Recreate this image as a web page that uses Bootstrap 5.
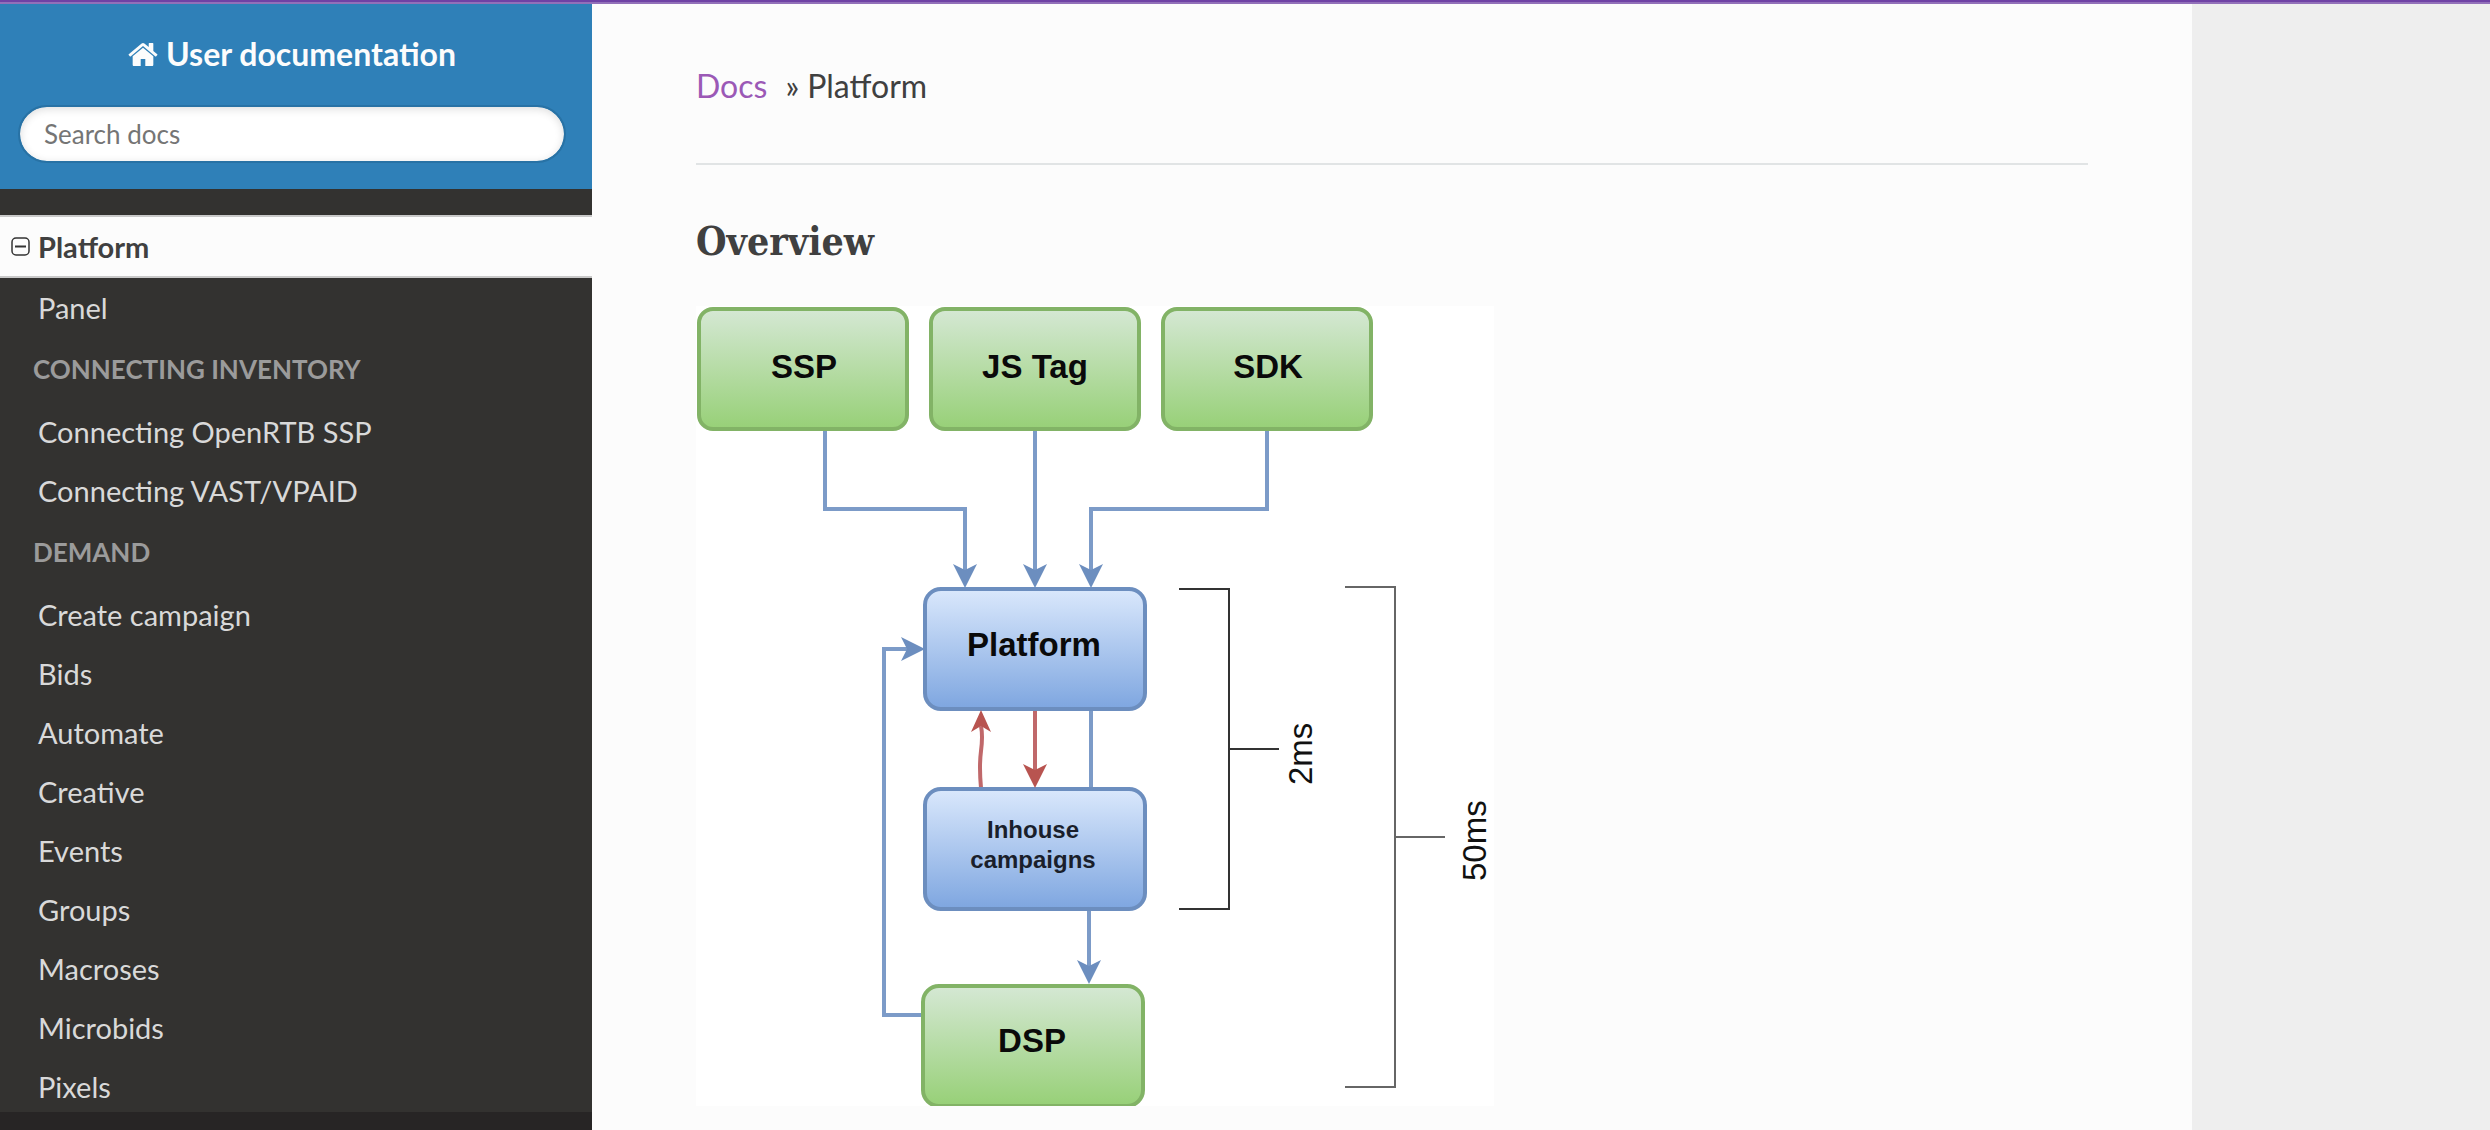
<!DOCTYPE html>
<html lang="en">
<head>
<meta charset="utf-8">
<meta name="viewport" content="width=device-width, initial-scale=1">
<title>Platform - User documentation</title>
<link href="https://cdn.jsdelivr.net/npm/bootstrap@5.3.0/dist/css/bootstrap.min.css" rel="stylesheet">
<style>
  body { font-family: Lato, "Open Sans", sans-serif; font-size: 32px; line-height: 48px; color: #404040; background: #eee; }
  .top-strip { height: 4px; background: #6f42a5; border-bottom: 2px solid #9270b9; }
  .side-panel { width: 592px; background: #333230; }
  .side-head { background: #2f80b8; padding: 22px 26px 26px 18px; gap: 23px; }
  .side-head a { color: #fcfcfc; line-height: 56px; font-weight: 700; gap: 8px; }
  .search-box { height: 58px; padding: 0 24px; font-size: 26px; border: 2px solid #2872a5; border-radius: 50px; box-shadow: inset 0 2px 8px #ddd; }
  .search-box::placeholder { color: #757575; }
  .side-menu { padding-top: 26px; font-size: 29px; }
  .side-menu a { display: block; color: #d9d9d9; line-height: 59px; padding-left: 38px; }
  .side-menu .is-current { display: flex; align-items: center; gap: 7px; padding-left: 11px; font-weight: 700; color: #404040; background: #fcfcfc; border-top: 2px solid #c9c9c9; border-bottom: 2px solid #c9c9c9; }
  .menu-caption { font-size: 26px; line-height: 65px; font-weight: 700; color: #9b9b9b; padding-left: 33px; }
  .version-bar { height: 18px; background: #272525; }
  .doc-body { max-width: 1600px; background: #fcfcfc; padding: 58px 104px 24px; }
  .trail { margin-bottom: 53px; gap: 8px; }
  .trail a { color: #9b59b6; margin-right: 10px; }
  .doc-body hr { margin: 0 0 52px; border-top: 2px solid #e1e4e5; opacity: 1; }
  .doc-title { font-family: "Roboto Slab", "DejaVu Serif Condensed", "DejaVu Serif", serif; font-stretch: condensed; font-size: 39px; line-height: 48px; font-weight: 700; margin-bottom: 41px; }
  .flow-chart { width: 798px; background: #fff; font-family: "Liberation Sans", Arial, sans-serif; }
</style>
</head>
<body>
<div class="d-flex flex-column vh-100 overflow-hidden">
  <div class="top-strip flex-shrink-0"></div>
  <div class="d-flex flex-grow-1 overflow-hidden">
    <aside class="side-panel d-flex flex-column flex-shrink-0">
      <div class="side-head d-flex flex-column flex-shrink-0">
        <a href="#" class="d-flex align-items-center justify-content-center text-decoration-none">
          <svg width="30" height="23" viewBox="0 253 1664 1283" fill="currentColor" aria-hidden="true"><path d="M1408 992v480q0 26-19 45t-45 19H960v-384H704v384H320q-26 0-45-19t-19-45V992q0-1 .5-3t.5-3l575-474 575 474q1 2 1 6zm223-69l-62 74q-8 9-21 11h-3q-13 0-21-7L832 424 140 1001q-12 8-24 7-13-2-21-11l-62-74q-8-10-7-23.500T37 878l719-599q32-26 76-26t76 26l244 204V288q0-14 9-23t23-9h192q14 0 23 9t9 23v408l219 182q10 8 11 21.500t-7 23.500z"/></svg>
          <span>User documentation</span>
        </a>
        <form role="search">
          <input type="text" class="search-box form-control" placeholder="Search docs" aria-label="Search docs">
        </form>
      </div>
      <nav class="side-menu flex-grow-1 overflow-hidden" aria-label="Documentation">
        <ul class="list-unstyled mb-0">
          <li><a href="#" class="is-current text-decoration-none">
            <svg width="20" height="20" viewBox="0 0 20 20" fill="none" stroke="#333" aria-hidden="true"><rect x="1" y="1" width="17" height="17" rx="4" stroke-width="1.500"/><path d="M4 9.500h11" stroke-width="2"/></svg><span>Platform</span></a></li>
          <li><a href="#" class="text-decoration-none">Panel</a></li>
        </ul>
        <div class="menu-caption text-uppercase">Connecting inventory</div>
        <ul class="list-unstyled mb-0">
          <li><a href="#" class="text-decoration-none">Connecting OpenRTB SSP</a></li>
          <li><a href="#" class="text-decoration-none">Connecting VAST/VPAID</a></li>
        </ul>
        <div class="menu-caption text-uppercase">Demand</div>
        <ul class="list-unstyled mb-0">
          <li><a href="#" class="text-decoration-none">Create campaign</a></li>
          <li><a href="#" class="text-decoration-none">Bids</a></li>
          <li><a href="#" class="text-decoration-none">Automate</a></li>
          <li><a href="#" class="text-decoration-none">Creative</a></li>
          <li><a href="#" class="text-decoration-none">Events</a></li>
          <li><a href="#" class="text-decoration-none">Groups</a></li>
          <li><a href="#" class="text-decoration-none">Macroses</a></li>
          <li><a href="#" class="text-decoration-none">Microbids</a></li>
          <li><a href="#" class="text-decoration-none">Pixels</a></li>
        </ul>
      </nav>
      <div class="version-bar flex-shrink-0"></div>
    </aside>
    <main class="doc-body flex-grow-1 overflow-hidden">
      <nav class="trail d-flex" aria-label="breadcrumb">
        <a href="#" class="text-decoration-none">Docs</a><span>»</span><span>Platform</span>
      </nav>
      <hr>
      <h1 class="doc-title">Overview</h1>
      <svg class="flow-chart d-block" viewBox="0 0 798 800" role="img" aria-label="Platform request flow">
        <defs>
          <linearGradient id="green" x1="0" y1="0" x2="0" y2="1"><stop offset="0" stop-color="#d5e8d4"/><stop offset="1" stop-color="#97d077"/></linearGradient>
          <linearGradient id="blue" x1="0" y1="0" x2="0" y2="1"><stop offset="0" stop-color="#dae8fc"/><stop offset="1" stop-color="#7ea6e0"/></linearGradient>
          <path id="tip" d="M0 0L-12-24L0-18L12-24Z"/>
        </defs>
        <g fill="none" stroke="#7c9bc8" stroke-width="4">
          <path d="M129 124V203H269V268"/>
          <path d="M339 124V268"/>
          <path d="M571 124V203H395V268"/>
          <path d="M395 404V482"/>
          <path d="M393 604V664"/>
          <path d="M227 709H188V343H214"/>
        </g>
        <g fill="none" stroke="#c0686a" stroke-width="4">
          <path d="M285 482Q283 460 285 445T285 420"/>
          <path d="M339 404V466"/>
        </g>
        <g stroke="#82b366" stroke-width="4" fill="url(#green)">
          <rect x="3" y="3" width="208" height="120" rx="14"/>
          <rect x="235" y="3" width="208" height="120" rx="14"/>
          <rect x="467" y="3" width="208" height="120" rx="14"/>
          <rect x="227" y="680" width="220" height="120" rx="16"/>
        </g>
        <g stroke="#6c8ebf" stroke-width="4" fill="url(#blue)">
          <rect x="229" y="283" width="220" height="120" rx="16"/>
          <rect x="229" y="483" width="220" height="120" rx="16"/>
        </g>
        <g fill="#6c8ebf">
          <use href="#tip" transform="translate(269 282)"/>
          <use href="#tip" transform="translate(339 282)"/>
          <use href="#tip" transform="translate(395 282)"/>
          <use href="#tip" transform="translate(393 678)"/>
          <use href="#tip" transform="translate(229 343) rotate(-90)"/>
        </g>
        <g fill="#b85450">
          <use href="#tip" transform="translate(339 482)"/>
          <path d="M285 404L295 426L285 420L275 426Z"/>
        </g>
        <g fill="none" stroke-width="2">
          <path stroke="#333" d="M483 283H533V603H483M533 443H583"/>
          <path stroke="#666" d="M649 281H699V781H649M699 531H749"/>
        </g>
        <g fill="#0a0a0a" text-anchor="middle" font-weight="700" font-size="33">
          <text x="108" y="72">SSP</text>
          <text x="339" y="72">JS Tag</text>
          <text x="572" y="72">SDK</text>
          <text x="338" y="350">Platform</text>
          <text x="336" y="746">DSP</text>
          <g font-size="24" fill="#1a1f2b">
            <text x="337" y="532">Inhouse</text>
            <text x="337" y="562">campaigns</text>
          </g>
        </g>
        <g fill="#111" font-size="33">
          <text transform="translate(616 479) rotate(-90)">2ms</text>
          <text transform="translate(790 575) rotate(-90)">50ms</text>
        </g>
      </svg>
    </main>
  </div>
</div>
<script src="https://cdn.jsdelivr.net/npm/bootstrap@5.3.0/dist/js/bootstrap.bundle.min.js"></script>
</body>
</html>
